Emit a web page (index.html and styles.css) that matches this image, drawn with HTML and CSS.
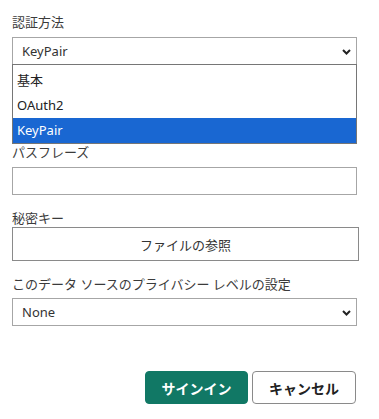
FILE: index.html
```html
<!DOCTYPE html>
<html lang="ja">
<head>
<meta charset="utf-8">
<title>認証</title>
<link rel="stylesheet" href="styles.css">
</head>
<body>
<div class="form">
  <div class="field field-auth">
    <div class="label">認証方法</div>
    <div class="select-wrap">
      <div class="select">
        <span class="select-value">KeyPair</span>
        <svg class="chevron" width="9" height="6" viewBox="0 0 9 6"><polyline points="1,1 4.5,4.5 8,1" fill="none" stroke="#222" stroke-width="2"/></svg>
      </div>
      <ul class="listbox">
        <li class="option">基本</li>
        <li class="option">OAuth2</li>
        <li class="option selected">KeyPair</li>
      </ul>
    </div>
  </div>
  <div class="field">
    <div class="label">パスフレーズ</div>
    <div class="input"></div>
  </div>
  <div class="field">
    <div class="label label-tight">秘密キー</div>
    <button class="file-btn">ファイルの参照</button>
  </div>
  <div class="field">
    <div class="label label-privacy">このデータ ソースのプライバシー レベルの設定</div>
    <div class="select">
      <span class="select-value">None</span>
      <svg class="chevron" width="9" height="6" viewBox="0 0 9 6"><polyline points="1,1 4.5,4.5 8,1" fill="none" stroke="#222" stroke-width="2"/></svg>
    </div>
  </div>
  <div class="actions">
    <button class="btn btn-primary">サインイン</button>
    <button class="btn btn-secondary">キャンセル</button>
  </div>
</div>
</body>
</html>
```

FILE: styles.css
```css
* { box-sizing: border-box; }
html, body { margin: 0; padding: 0; background: #fff; }
body {
  font-family: "Noto Sans", "Noto Sans CJK JP", sans-serif;
  font-size: 13px;
  color: #333;
}
.form {
  width: 345px;
  margin: 13px 0 0 12px;
  display: flex;
  flex-direction: column;
  gap: 14px;
}
.field { display: flex; flex-direction: column; }
.field-auth { margin-bottom: 64px; }
.label {
  height: 18px;
  line-height: 18px;
  margin-bottom: 6px;
  color: #3b3b3b;
  white-space: nowrap;
}
.label-tight { margin-bottom: 0; }
.label-privacy { margin-bottom: 5px; }
.select-wrap { position: relative; }
.select {
  height: 28px;
  border: 1px solid #a6a6a6;
  background: #fff;
  display: flex;
  align-items: center;
  justify-content: space-between;
  padding: 0 5px 0 9px;
  color: #333;
}
.select-value { line-height: 18px; }
.chevron { display: block; margin-top: 2px; }
.listbox {
  position: absolute;
  left: 0;
  top: 27px;
  width: 345px;
  margin: 0;
  padding: 3px 0 0;
  list-style: none;
  background: #fff;
  border: 1px solid #767676;
  z-index: 2;
}
.option {
  height: 25px;
  line-height: 25px;
  padding-left: 4px;
  color: #222;
}
.option.selected { background: #1967d2; color: #fff; }
.input {
  height: 28px;
  border: 1px solid #a6a6a6;
  background: #fff;
}
.file-btn {
  width: 347px;
  height: 34px;
  border: 1px solid #8a8a8a;
  background: #fff;
  font-family: inherit;
  font-size: 13px;
  color: #333;
  padding: 0;
  border-radius: 0;
}
.actions {
  margin-top: 31px;
  display: flex;
  justify-content: flex-end;
  gap: 4px;
  padding-right: 1px;
}
.btn {
  height: 33px;
  font-family: "Noto Sans CJK JP", sans-serif;
  font-size: 14px;
  font-weight: 700;
  padding: 0;
  border-radius: 4px;
}
.btn-primary {
  width: 103px;
  background: #117865;
  border: 1px solid #117865;
  color: #fff;
}
.btn-secondary {
  width: 104px;
  background: #fff;
  border: 1px solid #8a8a8a;
  color: #222;
}
```
